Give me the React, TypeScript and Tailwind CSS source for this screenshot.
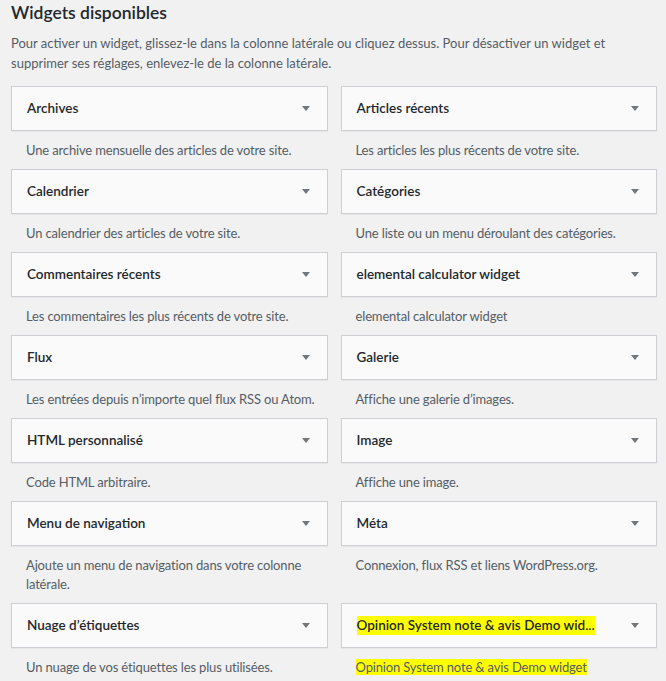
const widgets: { title: string; desc: string; highlight?: boolean }[] = [
  { title: "Archives", desc: "Une archive mensuelle des articles de votre site." },
  { title: "Articles récents", desc: "Les articles les plus récents de votre site." },
  { title: "Calendrier", desc: "Un calendrier des articles de votre site." },
  { title: "Catégories", desc: "Une liste ou un menu déroulant des catégories." },
  { title: "Commentaires récents", desc: "Les commentaires les plus récents de votre site." },
  { title: "elemental calculator widget", desc: "elemental calculator widget" },
  { title: "Flux", desc: "Les entrées depuis n’importe quel flux RSS ou Atom." },
  { title: "Galerie", desc: "Affiche une galerie d’images." },
  { title: "HTML personnalisé", desc: "Code HTML arbitraire." },
  { title: "Image", desc: "Affiche une image." },
  { title: "Menu de navigation", desc: "Ajoute un menu de navigation dans votre colonne latérale." },
  { title: "Méta", desc: "Connexion, flux RSS et liens WordPress.org." },
  { title: "Nuage d’étiquettes", desc: "Un nuage de vos étiquettes les plus utilisées." },
  {
    title: "Opinion System note & avis Demo wid...",
    desc: "Opinion System note & avis Demo widget",
    highlight: true,
  },
];

function Arrow() {
  return (
    <svg width="8" height="5" viewBox="0 0 8 5" className="shrink-0">
      <path d="M0 0 L8 0 L4 5 Z" fill="#72777c" />
    </svg>
  );
}

function Widget({ title, desc, highlight }: { title: string; desc: string; highlight?: boolean }) {
  return (
    <div>
      <div className="flex h-[45px] items-center justify-between border border-[#ccd0d4] bg-[#fafafa] pl-[15px] pr-[17px] shadow-[0_1px_1px_rgba(0,0,0,0.04)]">
        <h3
          className={`text-[13.5px] font-semibold leading-[19px] text-[#23282d] ${
            highlight ? "bg-[#ffff00]" : ""
          }`}
        >
          {title}
        </h3>
        <Arrow />
      </div>
      <p className="pl-[15px] pr-[4px] pt-[10px] pb-[9px] text-[13px] leading-[19px] tracking-[-0.15px] text-[#555d66]">
        <span className={highlight ? "bg-[#ffff00]" : ""}>{desc}</span>
      </p>
    </div>
  );
}

export default function App() {
  return (
    <div className="min-h-screen bg-[#f1f1f1] pl-[11px] pr-[9px] font-['Lato',sans-serif]">
      <h2 className="text-[17.5px] font-semibold leading-[26px] text-[#23282d]">Widgets disponibles</h2>
      <p className="mt-[7px] text-[13px] leading-[20px] text-[#555d66]">
        Pour activer un widget, glissez-le dans la colonne latérale ou cliquez dessus. Pour désactiver un widget et
        supprimer ses réglages, enlevez-le de la colonne latérale.
      </p>
      <div className="mt-[13px] grid grid-cols-2 gap-x-[13px]">
        {widgets.map((w) => (
          <Widget key={w.title} {...w} />
        ))}
      </div>
    </div>
  );
}
